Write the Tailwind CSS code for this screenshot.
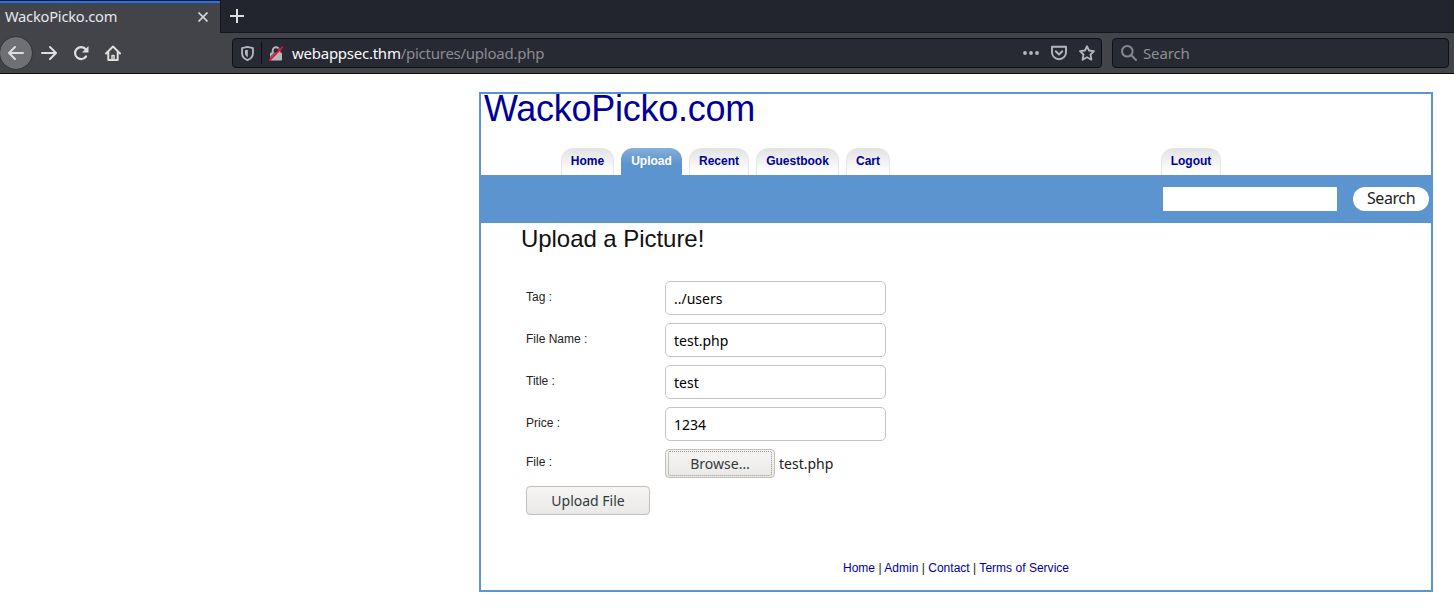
<!DOCTYPE html>
<html lang="en">
<head>
<meta charset="utf-8">
<title>WackoPicko.com</title>
<script src="https://cdn.jsdelivr.net/npm/@tailwindcss/browser@4"></script>
</head>
<body class="w-[1454px] h-[612px] overflow-hidden bg-white font-['Noto_Sans',sans-serif]">
<!-- Browser chrome -->
<header class="h-[74px] flex flex-col bg-[#42444a] border-b border-[#0c0c0d]">
  <div class="h-[33px] flex bg-[#23252e] shrink-0">
    <div class="w-[220px] border-t border-[#15171f] bg-[#42444a]">
      <div class="h-[30px] border-t-2 border-[#2075f5] flex items-center justify-between pl-[5px] pr-3 text-[#e8e8ea]">
        <span class="text-[14.67px] leading-5 pb-[2px] tracking-[-0.22px]">WackoPicko.com</span>
        <svg class="w-[10px] h-[10px]" viewBox="0 0 10 10" fill="none" stroke="#d4d4d5" stroke-width="1.7"><path d="M.5.5l9 9M9.500.5l-9 9"/></svg>
      </div>
    </div>
    <div class="grow border-l border-b border-[#14161d] flex items-start pl-[9px] pt-[9px]">
      <svg class="w-[14px] h-[14px]" viewBox="0 0 14 14" stroke="#dededf" stroke-width="2"><path d="M0 7h14M7 0v14"/></svg>
    </div>
  </div>
  <div class="h-[40px] flex items-center pr-[5px]">
    <div class="w-8 h-8 rounded-full bg-[#6f7074] outline outline-[#34363b] flex items-center justify-center">
      <svg class="w-4 h-4" viewBox="0 0 16 16" fill="none" stroke="#dededf" stroke-width="2" stroke-linecap="round" stroke-linejoin="round"><path d="M15 8H1.500M7 2L1 8l6 6"/></svg>
    </div>
    <svg class="w-4 h-4 ml-[9px]" viewBox="0 0 16 16" fill="none" stroke="#dededf" stroke-width="2" stroke-linecap="round" stroke-linejoin="round"><path d="M1 8h13.500M9 2l6 6-6 6"/></svg>
    <svg class="w-4 h-4 ml-4" viewBox="0 0 16 16"><path d="M12.500 4A6 6 0 1 0 13 11.500" fill="none" stroke="#dededf" stroke-width="2.200" stroke-linecap="round"/><path d="M15.500 1v6.500H9z" fill="#dededf"/></svg>
    <svg class="w-4 h-4 ml-4" viewBox="0 0 16 16" fill="none" stroke="#dededf" stroke-width="2" stroke-linecap="round" stroke-linejoin="round"><path d="M1 8.500l7-7 7 7M3.300 7v8h9.400V7"/><path d="M7 14.500V10.500h2v4" stroke-width="1.500"/></svg>
    <div class="ml-[111px] w-[870px] h-[30px] rounded-[4px] border border-[#0f1015] bg-[#272933] flex items-center">
      <svg class="w-[13px] h-[15px] ml-2" viewBox="0 0 12 14"><path d="M6 .9L11.100 2V6.500C11.100 9.800 9 12 6 13.100 3 12 .9 9.800.9 6.500V2z" fill="none" stroke="#b6b7bb" stroke-width="1.700" stroke-linejoin="round"/><path d="M6.300 3.500v7C4.700 9.500 3.600 8.300 3.600 6.500V4z" fill="#b6b7bb"/></svg>
      <div class="w-px h-[22px] bg-[#0f1015] ml-[7px]"></div>
      <svg class="w-[14px] h-[15px] ml-[7px]" viewBox="0 0 14 15"><path d="M3.700 7V4.500a3.300 3.300 0 0 1 6.600 0V7" fill="none" stroke="#b6b7bb" stroke-width="1.900"/><rect x="1" y="6.500" width="12" height="8" rx="1" fill="#b6b7bb"/><path d="M-.5 13L12.500 0" stroke="#272933" stroke-width="1"/><path d="M.7 14.200L13.300 1.300" stroke="#f4093c" stroke-width="1.900" stroke-linecap="round"/></svg>
      <span class="ml-[9px] text-[#f9f9fa] text-[15px] leading-5 tracking-[-0.25px] whitespace-nowrap">webappsec.thm<span class="text-[#8b8c91]">/pictures/upload.php</span></span>
      <div class="ml-auto mr-[6px] flex items-center gap-3">
        <svg class="w-4 h-4" viewBox="0 0 16 16" fill="#b6b7bb"><circle cx="2" cy="8" r="1.900"/><circle cx="8" cy="8" r="1.900"/><circle cx="14" cy="8" r="1.900"/></svg>
        <svg class="w-4 h-4" viewBox="0 0 16 16" fill="none" stroke="#b6b7bb" stroke-width="1.900" stroke-linecap="round" stroke-linejoin="round"><path d="M1 1.700h14v5.500a7 7 0 0 1-14 0zM4.700 6.300L8 9.500l3.300-3.200"/></svg>
        <svg class="w-4 h-4" viewBox="0 0 16 16" fill="none" stroke="#b6b7bb" stroke-width="1.800" stroke-linejoin="round"><path d="M8 1.200l2 4.300 5 .7-3.500 3.300.9 5.200L8 12.300l-4.400 2.400.9-5.200L1 6.200l5-.7z"/></svg>
      </div>
    </div>
    <div class="ml-[10px] grow h-[30px] rounded-[4px] border border-[#0f1015] bg-[#272933] flex items-center">
      <svg class="w-4 h-4 ml-2" viewBox="0 0 16 16" fill="none" stroke="#86878c" stroke-width="2" stroke-linecap="round"><circle cx="6.300" cy="6.300" r="5.300"/><path d="M10.300 10.300L15 15"/></svg>
      <span class="ml-[6px] text-[#8f9095] text-[15px] leading-5 tracking-[-0.15px]">Search</span>
    </div>
  </div>
</header>

<!-- Page -->
<main class="ml-[479px] mt-[18px] w-[954px] h-[500px] border-2 border-[#5c94cf] flex flex-col font-['Liberation_Sans',Arial,sans-serif] text-[12px] text-[#222]">
  <h1 class="h-[54px] pl-[3px] text-[36px] leading-[30px] tracking-[-0.27px] text-[#000099]">WackoPicko.com</h1>
  <nav class="h-[27px] pl-20 flex gap-[7px] font-bold text-[#000099] leading-[24px]">
    <a class="w-[53px] text-center rounded-t-[12px] border border-b-0 border-[#e6e7e8] bg-linear-to-b from-[#e2e3e4] to-white to-90%">Home</a>
    <a class="w-[61px] text-center rounded-t-[12px] pt-px bg-linear-to-b from-[#84aedb] to-[#5c94cf] to-60% text-white">Upload</a>
    <a class="w-[60px] text-center rounded-t-[12px] border border-b-0 border-[#e6e7e8] bg-linear-to-b from-[#e2e3e4] to-white to-90%">Recent</a>
    <a class="w-[83px] text-center rounded-t-[12px] border border-b-0 border-[#e6e7e8] bg-linear-to-b from-[#e2e3e4] to-white to-90%">Guestbook</a>
    <a class="w-[44px] text-center rounded-t-[12px] border border-b-0 border-[#e6e7e8] bg-linear-to-b from-[#e2e3e4] to-white to-90%">Cart</a>
    <a class="w-[60px] ml-auto mr-[210px] text-center rounded-t-[12px] border border-b-0 border-[#e6e7e8] bg-linear-to-b from-[#e2e3e4] to-white to-90%">Logout</a>
  </nav>
  <div class="h-12 bg-[#5c94cf] flex justify-end items-center gap-4 pr-[2px]">
    <input class="w-[174px] h-6 bg-white" aria-label="Search">
    <button class="w-[76px] h-6 pb-[2px] rounded-full bg-white text-[#222] text-[16px] leading-[22px] tracking-[-0.4px] font-['Noto_Sans',sans-serif]">Search</button>
  </div>
  <section class="pl-10">
    <h2 class="text-[24px] leading-8 tracking-[-0.05px] text-[#111]">Upload a Picture!</h2>
    <form class="pl-[5px] pt-[26px]">
      <div class="grid grid-cols-[139px_221px] gap-y-2 leading-8">
        <label>Tag :</label><input class="h-[34px] pt-px rounded-[5px] border border-[#c8c5c0] px-2 font-['Noto_Sans',sans-serif] text-[14px] text-black" value="../users">
        <label>File Name :</label><input class="h-[34px] pt-px rounded-[5px] border border-[#c8c5c0] px-2 font-['Noto_Sans',sans-serif] text-[14px] text-black" value="test.php">
        <label>Title :</label><input class="h-[34px] pt-px rounded-[5px] border border-[#c8c5c0] px-2 font-['Noto_Sans',sans-serif] text-[14px] text-black" value="test">
        <label>Price :</label><input class="h-[34px] pt-px rounded-[5px] border border-[#c8c5c0] px-2 font-['Noto_Sans',sans-serif] text-[14px] text-black" value="1234">
        <label class="leading-[27px]">File :</label>
        <div class="flex items-center gap-1 font-['Noto_Sans',sans-serif] text-[14px] text-[#222]">
          <button type="button" class="w-[110px] h-[29px] p-px rounded-[4px] border border-[#c3beb8] bg-linear-to-b from-[#f6f5f4] to-[#eae9e7] text-[#333a3d]"><span class="block h-[25px] leading-[24px] mx-px rounded-[2px] border border-dotted border-[#8f9294]">Browse…</span></button>
          <span class="leading-[29px]">test.php</span>
        </div>
      </div>
      <button type="button" class="mt-2 block w-[124px] h-[29px] rounded-[4px] border border-[#c3beb8] bg-linear-to-b from-[#f6f5f4] to-[#eae9e7] font-['Noto_Sans',sans-serif] text-[14px] leading-[27px] text-[#333a3d]">Upload File</button>
    </form>
  </section>
  <footer class="mt-auto mb-[14px] text-center leading-4 tracking-[0.02px]"><a class="text-[#000099]">Home</a> | <a class="text-[#000099]">Admin</a> | <a class="text-[#000099]">Contact</a> | <a class="text-[#000099]">Terms of Service</a></footer>
</main>
</body>
</html>
